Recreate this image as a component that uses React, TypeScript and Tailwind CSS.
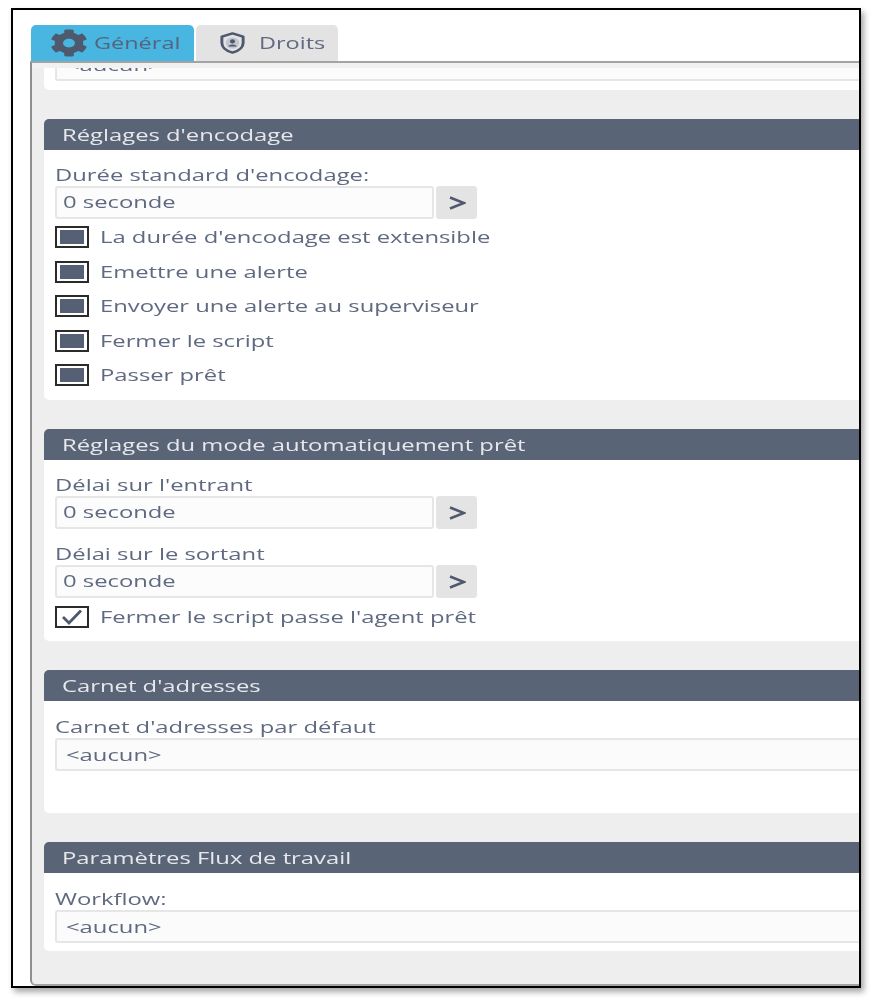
import { FaCog } from "react-icons/fa";

const textCls = "text-[17px] leading-[22px] text-[#5f6980]";
// the screenshot is stretched sideways, so the text is too
const wideCls = "inline-block origin-left scale-x-[1.4] whitespace-nowrap";

function ShieldIcon() {
  return (
    <svg viewBox="0 0 30 30" preserveAspectRatio="none" className="h-[24px] w-[29px] shrink-0" fill="none">
      <path
        d="M15 3 L26 7 V15 C26 21 21 25 15 27 C9 25 4 21 4 15 V7 Z"
        stroke="#4f596d"
        strokeWidth="3"
        strokeLinejoin="round"
      />
      <circle cx="15" cy="15" r="7" fill="#c3c6ce" />
      <circle cx="15" cy="13" r="2.6" fill="#4f596d" />
      <path d="M10.5 19.5 C11.3 15.8 18.7 15.8 19.5 19.5 Z" fill="#4f596d" />
    </svg>
  );
}

function PanelHeader({ title }: { title: string }) {
  return (
    <div className="flex h-[31px] items-center rounded-tl-[5px] bg-[#5a6477] pl-[18px] text-[17px] font-medium text-[#e6e8ec]">
      <span className={wideCls}>{title}</span>
    </div>
  );
}

function Duration({ label }: { label: string }) {
  return (
    <div>
      <div className={`flex h-[21px] items-end pl-[11px] ${textCls}`}>
        <span className={wideCls}>{label}</span>
      </div>
      <div className="flex pl-[11px]">
        <div className={`flex h-[33px] w-[379px] items-center rounded-[3px] border-2 border-[#e6e6e6] bg-[#fcfcfc] pb-[2px] pl-[6px] ${textCls}`}>
          <span className={wideCls}>0 seconde</span>
        </div>
        <div className="ml-[2px] flex h-[33px] w-[41px] items-center justify-center rounded-[3px] bg-[#e4e4e4]">
          <svg viewBox="0 0 18 14" className="h-[14px] w-[18px]" fill="none">
            <path d="M2 1.5 L16 7 L2 12.5" stroke="#4f596d" strokeWidth="2.6" />
          </svg>
        </div>
      </div>
    </div>
  );
}

function Check({ label, checked = false }: { label: string; checked?: boolean }) {
  return (
    <div className="flex h-[34.5px] items-center pl-[11px]">
      <div className="flex h-[22px] w-[34px] items-center justify-center border-2 border-[#2b2b2b] bg-white">
        {checked ? (
          <svg viewBox="0 0 24 16" className="h-[16px] w-[24px]" fill="none">
            <path d="M3 8 L9 14 L21 1.5" stroke="#4f596d" strokeWidth="2.8" />
          </svg>
        ) : (
          <div className="h-[14px] w-[24px] bg-[#566075]" />
        )}
      </div>
      <span className={`ml-[11px] ${textCls}`}>
        <span className={wideCls}>{label}</span>
      </span>
    </div>
  );
}

function SelectBox({ label }: { label?: string }) {
  return (
    <div>
      {label && (
        <div className={`flex h-[21px] items-end pl-[11px] ${textCls}`}>
          <span className={wideCls}>{label}</span>
        </div>
      )}
      <div className="pl-[11px]">
        <div className={`flex h-[33px] items-center rounded-l-[3px] border-y-2 border-l-2 border-[#e6e6e6] bg-[#fbfbfb] pl-[9px] ${textCls}`}>
          <span className={wideCls}>&lt;aucun&gt;</span>
        </div>
      </div>
    </div>
  );
}

export default function App() {
  return (
    <div className="h-[1002px] w-[873px] bg-white pl-[11px] pt-[8px] [font-family:'Open_Sans',sans-serif]">
      <div className="flex h-[980px] w-[850px] flex-col border-2 border-black bg-white pl-[17px] pt-[15px] shadow-[3px_4px_6px_rgba(0,0,0,0.35)]">
        <div className="flex h-full min-h-0 flex-col blur-[0.5px]">
          {/* tabs */}
          <div className="ml-[1px] flex h-[36px] shrink-0 items-stretch gap-[2px]">
            <div className="flex w-[163px] items-center rounded-t-[5px] bg-[#48b6e0] pl-[19px] text-[17px] text-[#55647e]">
              <FaCog preserveAspectRatio="none" className="h-[28px] w-[38px] shrink-0 text-[#4f596d]" />
              <span className="ml-[6px] inline-block origin-left scale-x-[1.38] whitespace-nowrap">Général</span>
            </div>
            <div className="flex w-[142px] items-center rounded-t-[5px] bg-[#e3e3e3] pl-[22px] text-[17px] text-[#5f6980]">
              <ShieldIcon />
              <span className="ml-[12px] inline-block origin-left scale-x-[1.38] whitespace-nowrap">Droits</span>
            </div>
          </div>

          <div className="flex min-h-0 flex-1 flex-col rounded-bl-[6px] border-y-2 border-l-2 border-t-[#a3a3a3] border-b-[#a3a3a3] border-l-[#8f8f8f] bg-[#eeeeee]">
            <div className="h-[5px] shrink-0 bg-[#f1f1f1]" />
            {/* scrolled content: first panel is cut off at the top */}
            <div className="min-h-0 flex-1 overflow-hidden pl-[12px]">
              <div className="-mt-[20px] flex flex-col gap-[29px]">
                <div className="h-[42px] rounded-bl-[5px] bg-white">
                  <SelectBox />
                </div>

                <section>
                  <PanelHeader title="Réglages d'encodage" />
                  <div className="h-[250px] rounded-bl-[5px] bg-white pt-[15px]">
                    <Duration label="Durée standard d'encodage:" />
                    <div className="pt-[1px]">
                      <Check label="La durée d'encodage est extensible" />
                      <Check label="Emettre une alerte" />
                      <Check label="Envoyer une alerte au superviseur" />
                      <Check label="Fermer le script" />
                      <Check label="Passer prêt" />
                    </div>
                  </div>
                </section>

                <section>
                  <PanelHeader title="Réglages du mode automatiquement prêt" />
                  <div className="h-[181px] rounded-bl-[5px] bg-white pt-[15px]">
                    <Duration label="Délai sur l'entrant" />
                    <div className="pt-[15px]">
                      <Duration label="Délai sur le sortant" />
                    </div>
                    <div className="pt-[2px]">
                      <Check label="Fermer le script passe l'agent prêt" checked />
                    </div>
                  </div>
                </section>

                <section>
                  <PanelHeader title="Carnet d'adresses" />
                  <div className="h-[112px] rounded-bl-[5px] bg-white pt-[16px]">
                    <SelectBox label="Carnet d'adresses par défaut" />
                  </div>
                </section>

                <section>
                  <PanelHeader title="Paramètres Flux de travail" />
                  <div className="h-[78px] rounded-bl-[5px] bg-white pt-[16px]">
                    <SelectBox label="Workflow:" />
                  </div>
                </section>
              </div>
            </div>
          </div>
        </div>
      </div>
    </div>
  );
}
